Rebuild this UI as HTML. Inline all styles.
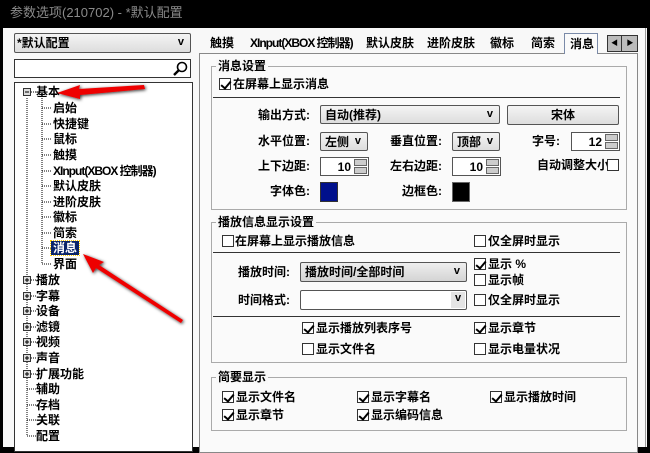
<!DOCTYPE html>
<html><head><meta charset="utf-8"><style>
*{margin:0;padding:0;box-sizing:border-box}
body{width:650px;height:447px;overflow:hidden;background:#000;font-family:"Liberation Sans","Noto Sans CJK SC",sans-serif;font-size:12px;font-weight:bold;color:#000;position:relative}
.win{position:absolute;left:3px;top:28px;width:644px;height:419px;background:#f8f8f8}
.a{position:absolute;white-space:nowrap;line-height:14px}
.box{position:absolute;border:1px solid #555}
.cb{position:absolute;width:12px;height:12px;border:1px solid #333;background:#fff}
.cb.c::after{content:"";position:absolute;left:3px;top:0px;width:4px;height:8px;border:solid #000;border-width:0 2px 2px 0;transform:rotate(40deg)}
.dd{position:absolute;border:1px solid #555;background:linear-gradient(#f4f4f4,#ddd);border-radius:2px}
.dd .v{position:absolute;right:6px;top:2px;font-size:11px}
.sp{position:absolute;border:1px solid #555;background:#fff}
.sp .n{position:absolute;right:17px;top:2px}
.sp .b{position:absolute;right:1px;width:13px;height:7px;background:#ccc;border:1px solid #666}
.grp{position:absolute;border:1px solid #aaa}
.gt{position:absolute;background:#f8f8f8;padding:0 2px;line-height:14px}
.line{position:absolute;height:1px;background:#333}
.x{letter-spacing:-1px}
</style></head><body>
<div class="a" style="left:10px;top:6px;color:#8a8a8a;font-weight:normal;font-size:13px">参数选项(210702) - *默认配置</div>
<div class="win"></div>
<!-- left panel -->
<div class="dd" style="left:14px;top:33px;width:177px;height:20px"><span class="a" style="left:2px;top:2px">*默认配置</span><span class="v">v</span></div>
<div class="box" style="left:14px;top:59px;width:177px;height:19px;background:#fff;border-color:#333">
<svg style="position:absolute;right:2px;top:1px" width="16" height="16"><circle cx="10" cy="6" r="4.5" fill="none" stroke="#000" stroke-width="1.6"/><line x1="7" y1="9" x2="2" y2="14" stroke="#000" stroke-width="2.4"/></svg></div>
<div class="box" style="left:14px;top:82px;width:179px;height:370px;background:#fff;border-color:#333"></div>
<svg style="position:absolute;left:0;top:0" width="200" height="447">
<line x1="27" y1="98" x2="27" y2="436" stroke="#000" stroke-dasharray="1,1"/>
<line x1="42" y1="98" x2="42" y2="264" stroke="#000" stroke-dasharray="1,1"/>
<g stroke="#000" stroke-dasharray="1,1">
<line x1="42" y1="108" x2="52" y2="108"/><line x1="42" y1="124" x2="52" y2="124"/><line x1="42" y1="139" x2="52" y2="139"/><line x1="42" y1="155" x2="52" y2="155"/><line x1="42" y1="171" x2="52" y2="171"/><line x1="42" y1="186" x2="52" y2="186"/><line x1="42" y1="202" x2="52" y2="202"/><line x1="42" y1="217" x2="52" y2="217"/><line x1="42" y1="233" x2="52" y2="233"/><line x1="42" y1="248" x2="52" y2="248"/><line x1="42" y1="264" x2="52" y2="264"/>
<line x1="27" y1="389" x2="36" y2="389"/><line x1="27" y1="405" x2="36" y2="405"/><line x1="27" y1="420" x2="36" y2="420"/><line x1="27" y1="436" x2="36" y2="436"/>
<line x1="31" y1="92" x2="36" y2="92"/><line x1="31" y1="280" x2="36" y2="280"/><line x1="31" y1="296" x2="36" y2="296"/><line x1="31" y1="311" x2="36" y2="311"/><line x1="31" y1="327" x2="36" y2="327"/><line x1="31" y1="342" x2="36" y2="342"/><line x1="31" y1="358" x2="36" y2="358"/><line x1="31" y1="374" x2="36" y2="374"/>
</g>
<g fill="#ddd" stroke="#333">
<rect x="23.5" y="88.5" width="7" height="7"/><rect x="23.5" y="276.5" width="7" height="7"/><rect x="23.5" y="292.5" width="7" height="7"/><rect x="23.5" y="307.5" width="7" height="7"/><rect x="23.5" y="323.5" width="7" height="7"/><rect x="23.5" y="338.5" width="7" height="7"/><rect x="23.5" y="354.5" width="7" height="7"/><rect x="23.5" y="370.5" width="7" height="7"/>
</g>
<g stroke="#000"><line x1="25" y1="92" x2="29" y2="92"/>
<path d="M25 280h4M27 278v4M25 296h4M27 294v4M25 311h4M27 309v4M25 327h4M27 325v4M25 342h4M27 340v4M25 358h4M27 356v4M25 374h4M27 372v4"/></g>
</svg>
<div class="a" style="left:36px;top:85px">基本</div>
<div class="a" style="left:53px;top:101px">启始</div>
<div class="a" style="left:53px;top:117px">快捷键</div>
<div class="a" style="left:53px;top:132px">鼠标</div>
<div class="a" style="left:53px;top:148px">触摸</div>
<div class="a x" style="left:53px;top:164px">XInput(XBOX 控制器)</div>
<div class="a" style="left:53px;top:179px">默认皮肤</div>
<div class="a" style="left:53px;top:195px">进阶皮肤</div>
<div class="a" style="left:53px;top:210px">徽标</div>
<div class="a" style="left:53px;top:226px">简索</div>
<div class="a" style="left:51px;top:241px;background:#0a246a;color:#fff;padding:0 2px;outline:1px dotted #fc0">消息</div>
<div class="a" style="left:53px;top:257px">界面</div>
<div class="a" style="left:36px;top:273px">播放</div>
<div class="a" style="left:36px;top:289px">字幕</div>
<div class="a" style="left:36px;top:304px">设备</div>
<div class="a" style="left:36px;top:320px">滤镜</div>
<div class="a" style="left:36px;top:335px">视频</div>
<div class="a" style="left:36px;top:351px">声音</div>
<div class="a" style="left:36px;top:367px">扩展功能</div>
<div class="a" style="left:36px;top:382px">辅助</div>
<div class="a" style="left:36px;top:398px">存档</div>
<div class="a" style="left:36px;top:413px">关联</div>
<div class="a" style="left:36px;top:429px">配置</div>
<!-- tabs -->
<div class="a" style="left:210px;top:36px">触摸</div>
<div class="a x" style="left:250px;top:36px">XInput(XBOX 控制器)</div>
<div class="a" style="left:366px;top:36px">默认皮肤</div>
<div class="a" style="left:427px;top:36px">进阶皮肤</div>
<div class="a" style="left:490px;top:36px">徽标</div>
<div class="a" style="left:531px;top:36px">简索</div>
<div class="box" style="left:199px;top:53px;width:439px;height:400px;border-color:#888;background:#fafafa"></div>
<div style="position:absolute;left:564px;top:33px;width:34px;height:21px;border:1px solid #7a8aa8;border-bottom:none;background:#fafafa"></div>
<div class="a" style="left:570px;top:37px">消息</div>
<div style="position:absolute;left:607px;top:35px;width:31px;height:17px;border:1px solid #333;background:#bbb"><span style="position:absolute;left:0;top:0;width:14px;height:15px;border-right:1px solid #333;font-size:7px;text-align:center;line-height:15px">◀</span><span style="position:absolute;left:15px;top:0;width:14px;font-size:7px;text-align:center;line-height:15px">▶</span></div>
<div style="position:absolute;left:645px;top:28px;width:1px;height:419px;background:#999"></div>
<!-- group 1 -->
<div class="grp" style="left:211px;top:66px;width:416px;height:144px"></div>
<div class="gt" style="left:216px;top:59px">消息设置</div>
<div class="cb c" style="left:219px;top:78px"></div><div class="a" style="left:233px;top:77px">在屏幕上显示消息</div>
<div class="line" style="left:213px;top:97px;width:407px"></div>
<div class="a" style="left:258px;top:108px">输出方式:</div>
<div class="dd" style="left:320px;top:105px;width:180px;height:19px"><span class="a" style="left:4px;top:2px">自动(推荐)</span><span class="v">v</span></div>
<div class="dd" style="left:507px;top:105px;width:112px;height:20px"><span class="a" style="left:43px;top:2px">宋体</span></div>
<div class="a" style="left:258px;top:134px">水平位置:</div>
<div class="dd" style="left:320px;top:132px;width:48px;height:19px"><span class="a" style="left:4px;top:2px">左侧</span><span class="v">v</span></div>
<div class="a" style="left:390px;top:134px">垂直位置:</div>
<div class="dd" style="left:452px;top:132px;width:48px;height:19px"><span class="a" style="left:4px;top:2px">顶部</span><span class="v">v</span></div>
<div class="a" style="left:532px;top:134px">字号:</div>
<div class="sp" style="left:571px;top:132px;width:49px;height:19px"><span class="n">12</span><span class="b" style="top:1px"></span><span class="b" style="top:9px"></span></div>
<div class="a" style="left:258px;top:159px">上下边距:</div>
<div class="sp" style="left:320px;top:157px;width:49px;height:19px"><span class="n">10</span><span class="b" style="top:1px"></span><span class="b" style="top:9px"></span></div>
<div class="a" style="left:390px;top:159px">左右边距:</div>
<div class="sp" style="left:452px;top:157px;width:49px;height:19px"><span class="n">10</span><span class="b" style="top:1px"></span><span class="b" style="top:9px"></span></div>
<div class="a" style="left:537px;top:158px">自动调整大小</div><div class="cb" style="left:607px;top:159px"></div>
<div class="a" style="left:270px;top:184px">字体色:</div>
<div style="position:absolute;left:320px;top:182px;width:18px;height:20px;border:1px solid #333;background:#00108c"></div>
<div class="a" style="left:402px;top:184px">边框色:</div>
<div style="position:absolute;left:452px;top:182px;width:18px;height:20px;border:1px solid #666;background:#000"></div>
<!-- group 2 -->
<div class="grp" style="left:211px;top:222px;width:416px;height:141px"></div>
<div class="gt" style="left:216px;top:215px">播放信息显示设置</div>
<div class="cb" style="left:222px;top:235px"></div><div class="a" style="left:235px;top:234px">在屏幕上显示播放信息</div>
<div class="cb" style="left:474px;top:235px"></div><div class="a" style="left:488px;top:234px">仅全屏时显示</div>
<div class="line" style="left:213px;top:252px;width:407px"></div>
<div class="a" style="left:238px;top:265px">播放时间:</div>
<div class="dd" style="left:300px;top:262px;width:167px;height:20px;background:linear-gradient(#eee,#d4d4d4)"><span class="a" style="left:4px;top:2px">播放时间/全部时间</span><span class="v">v</span></div>
<div class="cb c" style="left:474px;top:258px"></div><div class="a" style="left:488px;top:257px">显示 %</div>
<div class="cb" style="left:474px;top:274px"></div><div class="a" style="left:488px;top:273px">显示帧</div>
<div class="a" style="left:238px;top:293px">时间格式:</div>
<div class="dd" style="left:300px;top:290px;width:167px;height:20px;background:#fff"><span class="v" style="background:#e4e4e4;right:1px;top:1px;width:14px;height:16px;text-align:center">v</span></div>
<div class="cb" style="left:474px;top:294px"></div><div class="a" style="left:488px;top:293px">仅全屏时显示</div>
<div class="line" style="left:213px;top:316px;width:407px"></div>
<div class="cb c" style="left:302px;top:322px"></div><div class="a" style="left:316px;top:321px">显示播放列表序号</div>
<div class="cb c" style="left:474px;top:322px"></div><div class="a" style="left:488px;top:321px">显示章节</div>
<div class="cb" style="left:302px;top:343px"></div><div class="a" style="left:316px;top:342px">显示文件名</div>
<div class="cb" style="left:474px;top:343px"></div><div class="a" style="left:488px;top:342px">显示电量状况</div>
<!-- group 3 -->
<div class="grp" style="left:211px;top:377px;width:416px;height:54px"></div>
<div class="gt" style="left:216px;top:370px">简要显示</div>
<div class="cb c" style="left:222px;top:391px"></div><div class="a" style="left:236px;top:390px">显示文件名</div>
<div class="cb c" style="left:357px;top:391px"></div><div class="a" style="left:371px;top:390px">显示字幕名</div>
<div class="cb c" style="left:490px;top:391px"></div><div class="a" style="left:504px;top:390px">显示播放时间</div>
<div class="cb c" style="left:222px;top:409px"></div><div class="a" style="left:236px;top:408px">显示章节</div>
<div class="cb c" style="left:357px;top:409px"></div><div class="a" style="left:371px;top:408px">显示编码信息</div>
<!-- arrows -->
<svg style="position:absolute;left:0;top:0" width="650" height="447">
<defs><filter id="s" x="-20%" y="-50%" width="140%" height="200%"><feDropShadow dx="1" dy="1" stdDeviation="1.5" flood-color="#000" flood-opacity="0.8"/></filter></defs>
<g fill="#e00" filter="url(#s)">
<polygon points="57,93 80,85 79,89 144,85 145,89 80,95 80,99"/>
<polygon points="83,254 104,262 99,265 183,320 181,323 96,268 93,273"/>
</g>
</svg>
</body></html>
